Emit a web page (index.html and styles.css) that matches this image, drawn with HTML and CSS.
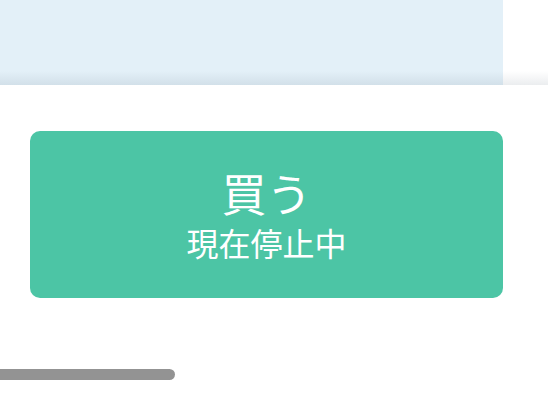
FILE: index.html
```html
<!DOCTYPE html>
<html lang="ja">

<head>
    <meta charset="UTF-8">
    <meta name="viewport" content="width=device-width, initial-scale=1.0">
    <title>買う</title>
    <link rel="stylesheet" href="styles.css">
</head>

<body>
    <div class="header">
        <div class="header-panel"></div>
    </div>
    <div class="buy-area">
        <button class="buy-btn" disabled>
            <span class="buy-title">買う</span>
            <span class="buy-status">現在停止中</span>
        </button>
    </div>
    <div class="scroll-track">
        <div class="scroll-thumb"></div>
    </div>
</body>

</html>
```
FILE: styles.css
```css
* {
    margin: 0;
    padding: 0;
    box-sizing: border-box;
}
html,
body {
    font-family: 'Noto Sans CJK JP', 'Noto Sans', sans-serif;
    background: #fff;
}
.header {
    position: relative;
    height: 85px;
}
.header-panel {
    width: 503px;
    height: 100%;
    background-color: #e3f0f8;
}
.header::after {
    content: '';
    position: absolute;
    left: 0;
    right: 0;
    bottom: 0;
    height: 14px;
    background: linear-gradient(to bottom, rgba(60, 80, 100, 0) 0%, rgba(60, 80, 100, 0.1) 100%);
}
.buy-area {
    padding: 46px 45px 0 30px;
}
.buy-btn {
    width: 473px;
    height: 167px;
    display: flex;
    flex-direction: column;
    align-items: center;
    justify-content: center;
    border: none;
    border-radius: 10px;
    background-color: #4cc5a5;
    color: #fff;
    font-family: inherit;
    padding-top: 1px;
}
.buy-title {
    font-size: 45px;
    line-height: 50px;
}
.buy-status {
    font-size: 32px;
    line-height: 40px;
    margin-top: 4px;
}
.scroll-track {
    margin-top: 71px;
}
.scroll-thumb {
    width: 175px;
    height: 11px;
    background-color: #939393;
    border-radius: 0 6px 6px 0;
}
```
